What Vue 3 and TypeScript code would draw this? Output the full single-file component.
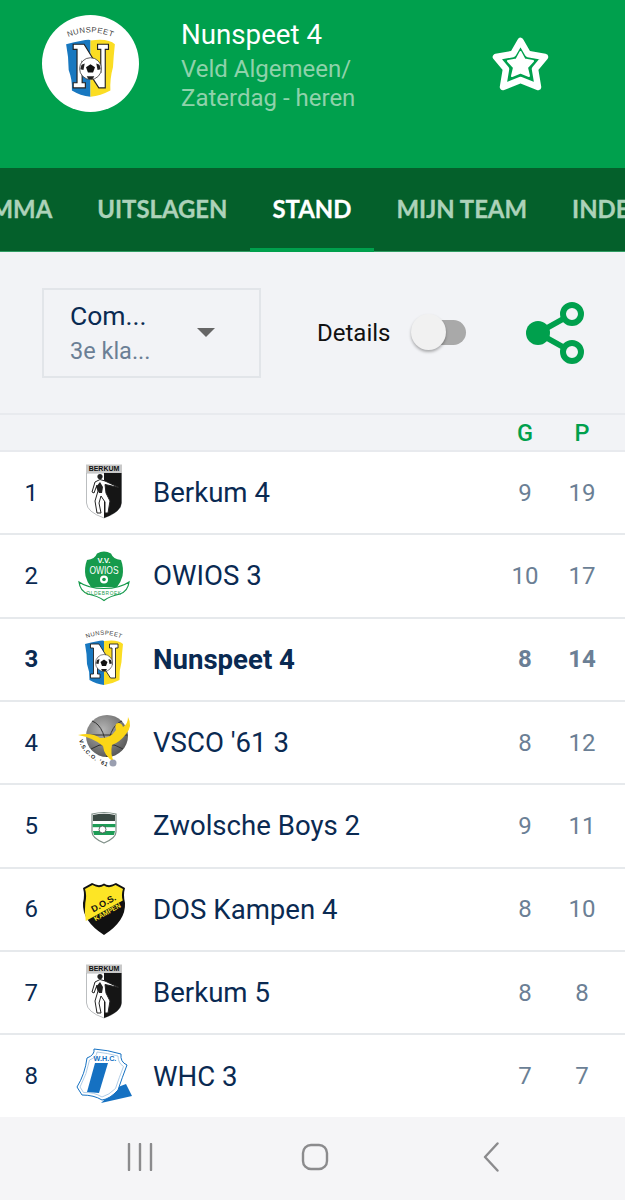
<script setup lang="ts">
interface Team {
  pos: number
  logo: string
  name: string
  g: number
  p: number
  own?: boolean
}

const tabs: { label: string; active?: boolean }[] = [
  { label: 'PROGRAMMA' },
  { label: 'UITSLAGEN' },
  { label: 'STAND', active: true },
  { label: 'MIJN TEAM' },
  { label: 'INDELING' }
]

const teams: Team[] = [
  { pos: 1, logo: 'berkum', name: 'Berkum 4', g: 9, p: 19 },
  { pos: 2, logo: 'owios', name: 'OWIOS 3', g: 10, p: 17 },
  { pos: 3, logo: 'nunspeet', name: 'Nunspeet 4', g: 8, p: 14, own: true },
  { pos: 4, logo: 'vsco', name: "VSCO '61 3", g: 8, p: 12 },
  { pos: 5, logo: 'zwolsche', name: 'Zwolsche Boys 2', g: 9, p: 11 },
  { pos: 6, logo: 'dos', name: 'DOS Kampen 4', g: 8, p: 10 },
  { pos: 7, logo: 'berkum', name: 'Berkum 5', g: 8, p: 8 },
  { pos: 8, logo: 'whc', name: 'WHC 3', g: 7, p: 7 }
]
</script>

<template>
  <div class="screen">
    <svg class="defs" aria-hidden="true">
      <defs>
        <radialGradient id="vsco-ball" cx="40%" cy="35%" r="70%">
          <stop offset="0" stop-color="#b5b5b5" />
          <stop offset="1" stop-color="#555" />
        </radialGradient>

        <symbol id="logo-berkum" viewBox="0 0 60 60">
          <path d="M12.500 10V40Q13 49 30 55Q47 49 47.500 40V10Z" fill="#fff" stroke="#a9adb0" stroke-width=".8" />
          <path d="M30 10H47.500V40Q47 49 30 55Z" fill="#151515" />
          <rect x="12" y="1.500" width="36" height="8.500" fill="#c9c9c9" />
          <text x="30" y="8.300" text-anchor="middle" class="lg-text" font-size="7" font-weight="700" fill="#111">BERKUM</text>
          <circle cx="26" cy="13.500" r="2.600" fill="#222" />
          <path d="M21 19L26 16.500L31 18L45 24.500L31 21.500L32 30L36 38L34 50L31 50L31 39L27 33L25 40L27 50L23 50L21 38L24 28L23 22L20 30L18 29Z" fill="#fff" stroke="#222" stroke-width="1" />
          <path d="M22 24L26 19L29 24L28 30H25Z" fill="#222" />
        </symbol>

        <symbol id="logo-owios" viewBox="0 0 60 60">
          <path d="M13 14Q21 13 23 7.500Q30 3.500 37 7.500Q39 13 47 14Q50 22 48.500 30Q47 36 43 41H17Q13 36 11.500 30Q10 22 13 14Z" fill="#169a4c" />
          <text x="30" y="16.500" text-anchor="middle" class="lg-text" font-size="7.500" font-weight="700" fill="#fff">V.V.</text>
          <text x="30" y="27.500" text-anchor="middle" class="lg-text" font-size="10.500" fill="#fff" textLength="29" lengthAdjust="spacingAndGlyphs">OWIOS</text>
          <circle cx="30" cy="33.500" r="4" fill="#fff" />
          <circle cx="30" cy="33.500" r="1.800" fill="#169a4c" />
          <path d="M5 36Q14 42.500 30 42.500Q46 42.500 55 36Q54 45 46 48Q36 50 30 54.500Q24 50 14 48Q6 45 5 36Z" fill="#fff" stroke="#169a4c" stroke-width="1.200" />
          <text x="30" y="48.500" text-anchor="middle" class="lg-text" font-size="4.800" fill="#169a4c" letter-spacing=".6">OLDEBROEK</text>
        </symbol>

        <symbol id="logo-nunspeet" viewBox="0 0 60 60">
          <path id="nunspeet-arc" d="M10 10.500Q30 1 50 10.500" fill="none" />
          <text class="lg-text" font-size="6" fill="#444" letter-spacing=".4">
            <textPath href="#nunspeet-arc" startOffset="50%" text-anchor="middle">NUNSPEET</textPath>
          </text>
          <path d="M11 15Q30 10 30 12V56Q22 55 15.500 51Q16 43 13 35Q13 25 11 15Z" fill="#1878c0" />
          <path d="M30 12Q44 10 49 15Q48 24 47.500 33Q45 42 45.500 51Q38 55 30 56Z" fill="#fbdd23" />
          <path d="M16.500 15H25L38 36V19H35.500V15H44V19H41.500V49H36.500L23.500 29V45H26V49H16.500V45H19.500V19H16.500Z" fill="#fff" stroke="#222" stroke-width=".9" />
          <circle cx="30" cy="34" r="8.500" fill="#fff" stroke="#333" stroke-width=".6" />
          <path d="M30 30.500L33.500 33L32 37H28L26.500 33Z" fill="#111" />
          <path d="M23 31L25.500 30L24.500 35L22 34.500ZM37 31L34.500 30L35.500 35L38 34.500ZM27 40L33 40L31.500 42.300H28.500Z" fill="#222" />
        </symbol>

        <symbol id="logo-vsco" viewBox="0 0 60 60">
          <circle cx="33" cy="23" r="21" fill="url(#vsco-ball)" />
          <path d="M18 8Q32 13 33 44M48 8Q34 13 33 44M12.500 22H53.500M17 36Q33 26 49 36" fill="none" stroke="#333" stroke-width="1" />
          <path d="M4 22Q18 19 26 25Q36 26 42 17Q40 11 44 10Q48 10 49 14Q54 11 54 4Q59 13 52 21Q46 29 38 32Q36 41 40 49Q30 43 29 33Q20 25 4 22Z" fill="#fbd617" />
          <circle cx="39" cy="50" r="3.500" fill="#9a9fb0" />
          <path id="vsco-arc" d="M5 27Q9 46 42 57" fill="none" />
          <text class="lg-text" font-size="5.500" font-weight="700" fill="#222" letter-spacing=".9">
            <textPath href="#vsco-arc">V.S.C.O. '61</textPath>
          </text>
        </symbol>

        <symbol id="logo-zwolsche" viewBox="0 0 60 60">
          <path d="M18 18Q30 15 42 18V36Q42 42 30 47Q18 42 18 36Z" fill="#fff" stroke="#7f8f88" stroke-width="1.200" />
          <path d="M19 19Q30 16.500 41 19V25H19Z" fill="#3b4a44" />
          <rect x="18.600" y="28" width="22.800" height="3.200" fill="#1e9c56" />
          <path d="M19 35H41L40 39H20Z" fill="#1e9c56" />
          <circle cx="28.500" cy="33.500" r="3.500" fill="#fff" stroke="#3b4a44" stroke-width=".8" />
        </symbol>

        <symbol id="logo-dos" viewBox="0 0 60 60">
          <path d="M18 4Q25 8 30 4.500Q35 8 42 4L51 9Q49 16 51 24Q52 42 30 56Q8 42 9 24Q11 16 9 9Z" fill="#111" />
          <path d="M18.500 6Q25 10 30 6.500Q35 10 41.500 6L49 10Q47 16 48.800 21.500L11.800 42Q10.200 32 11.300 24Q13 16 11 10Z" fill="#fde525" />
          <text transform="translate(31 27) rotate(-29)" text-anchor="middle" class="lg-text" font-size="9" font-weight="700" fill="#111">D.O.S.</text>
          <text transform="translate(34.500 35) rotate(-29)" text-anchor="middle" class="lg-text" font-size="6.800" font-weight="700" fill="#fde525">KAMPEN</text>
        </symbol>

        <symbol id="logo-whc" viewBox="0 0 60 60">
          <path d="M44 41L52 38L58 50L27 57Z" fill="#1571c2" />
          <path d="M13 12Q21 9 20 3Q34 4 47 8Q46 16 53 19Q48 32 44 44Q36 53 28 54Q20 49 8 49L3 41Q11 28 13 12Z" fill="#fff" stroke="#1571c2" stroke-width="1" />
          <path d="M15.500 14Q23 11 23 6Q33 7 44 10Q44 17 49.500 20.500Q45 32 41.500 42.500Q35 49 28 51Q20 46 9.500 46.500L6 41Q13 28 15.500 14Z" fill="none" stroke="#9cbfe0" stroke-width=".8" />
          <path d="M21 17H34L25 47L13 46Z" fill="#1571c2" />
          <text x="31" y="15" text-anchor="middle" class="lg-text" font-size="7.200" font-weight="700" fill="#1571c2">W.H.C.</text>
        </symbol>
      </defs>
    </svg>

    <header class="club">
      <div class="club-badge">
        <svg class="club-logo" viewBox="0 0 60 60"><use href="#logo-nunspeet" /></svg>
      </div>
      <div class="club-info">
        <div class="club-name">Nunspeet 4</div>
        <div class="club-league">Veld Algemeen/<br />Zaterdag - heren</div>
      </div>
      <svg class="star" viewBox="490 34 62 60">
        <path d="M520.500 41L528 54L545 57L535 69L538 87L520.500 80L503 87L506 69L496 57L513 54Z" fill="none" stroke="#fff" stroke-width="6.500" stroke-linejoin="round" />
        <path d="M520.500 52L524.500 59.500L533 61L527 67.500L529 76L520.500 72.500L512 76L514 67.500L508 61L516.500 59.500Z" fill="#fff" stroke="#fff" stroke-width="2" stroke-linejoin="round" />
      </svg>
    </header>

    <nav class="tabs">
      <div v-for="tab in tabs" :key="tab.label" class="tab" :class="{ active: tab.active }">{{ tab.label }}</div>
    </nav>

    <section class="controls">
      <div class="select">
        <div class="select-text">
          <div class="select-main">Com...</div>
          <div class="select-sub">3e kla...</div>
        </div>
        <span class="caret"></span>
      </div>
      <div class="details">
        <span class="details-label">Details</span>
        <span class="switch"><span class="thumb"></span></span>
      </div>
      <svg class="share" viewBox="526 301 60 62">
        <path d="M538 332L572 313M538 332L572 351" stroke="#00a04d" stroke-width="5.500" />
        <circle cx="538" cy="332" r="12" fill="#00a04d" />
        <circle cx="572" cy="313" r="9" fill="#f2f3f6" stroke="#00a04d" stroke-width="6" />
        <circle cx="572" cy="351" r="9" fill="#f2f3f6" stroke="#00a04d" stroke-width="6" />
      </svg>
    </section>

    <div class="table-head">
      <span class="col-g">G</span>
      <span class="col-p">P</span>
    </div>

    <main class="table">
      <div v-for="team in teams" :key="team.pos" class="row" :class="{ own: team.own }">
        <span class="pos">{{ team.pos }}</span>
        <svg class="team-logo" viewBox="0 0 60 60"><use :href="`#logo-${team.logo}`" /></svg>
        <span class="team-name">{{ team.name }}</span>
        <span class="col-g num">{{ team.g }}</span>
        <span class="col-p num">{{ team.p }}</span>
      </div>
    </main>

    <footer class="sysnav">
      <svg class="nav-icon recents" viewBox="0 0 26 28">
        <path d="M2 1V27M13 1V27M24 1V27" stroke="#8b8b8d" stroke-width="2.400" stroke-linecap="round" />
      </svg>
      <svg class="nav-icon home" viewBox="0 0 28 28">
        <rect x="2" y="2" width="24" height="24" rx="8" fill="none" stroke="#8b8b8d" stroke-width="2.400" />
      </svg>
      <svg class="nav-icon back" viewBox="0 0 16 30">
        <path d="M14.500 1.500L2 15L14.500 28.500" fill="none" stroke="#8b8b8d" stroke-width="2.400" stroke-linecap="round" stroke-linejoin="round" />
      </svg>
    </footer>
  </div>
</template>

<style scoped>
.screen {
  width: 625px;
  height: 1200px;
  overflow: hidden;
  background: #fff;
  font-family: Roboto, "Liberation Sans", sans-serif;
  display: flex;
  flex-direction: column;
}
.defs {
  position: absolute;
  width: 0;
  height: 0;
}
.lg-text {
  font-family: "Liberation Sans", sans-serif;
}

.club {
  height: 168px;
  flex: none;
  box-sizing: border-box;
  background: #00a04d;
  display: flex;
  align-items: flex-start;
  padding: 15px 0 0 42px;
}
.club-badge {
  width: 97px;
  height: 97px;
  flex: none;
  border-radius: 50%;
  background: #fff;
  display: flex;
  align-items: center;
  justify-content: center;
}
.club-logo {
  width: 77px;
  height: 77px;
}
.club-info {
  width: 309px;
  margin-left: 42px;
  margin-top: 2px;
}
.club-name {
  font-size: 27.700px;
  line-height: 35px;
  color: #fff;
}
.club-league {
  font-size: 24px;
  line-height: 29px;
  color: #8fd2ab;
  margin-top: 3px;
}
.star {
  width: 62px;
  height: 60px;
  flex: none;
  margin-top: 19px;
}

.tabs {
  height: 84px;
  flex: none;
  box-sizing: border-box;
  background: #04602b;
  box-shadow: inset 0 -1px 0 #2f9c63;
  display: flex;
  overflow: hidden;
}
.tab {
  flex: none;
  box-sizing: border-box;
  height: 84px;
  padding: 0 22.500px;
  line-height: 81px;
  font-family: Lato, "Liberation Sans", sans-serif;
  font-size: 23.900px;
  font-weight: 700;
  -webkit-text-stroke: .3px currentColor;
  color: #acd2b9;
  border-bottom: 4px solid transparent;
}
.tab:first-child {
  margin-left: -130.500px;
}
.tab.active {
  color: #fff;
  border-bottom-color: #00a04d;
}

.controls {
  height: 161px;
  flex: none;
  box-sizing: border-box;
  background: #f2f3f6;
  display: flex;
  align-items: center;
  padding: 0 39px 0 42px;
}
.select {
  width: 219px;
  height: 90px;
  flex: none;
  box-sizing: border-box;
  border: 2px solid #e2e5e9;
  display: flex;
  align-items: center;
  padding-left: 26px;
}
.select-text {
  width: 127px;
}
.select-main {
  font-size: 26.500px;
  line-height: 36px;
  color: #0a2a52;
}
.select-sub {
  font-size: 23.500px;
  line-height: 34px;
  color: #6b7f95;
}
.caret {
  width: 0;
  height: 0;
  border-left: 9px solid transparent;
  border-right: 9px solid transparent;
  border-top: 9px solid #666;
}
.details {
  display: flex;
  align-items: center;
  margin-left: 56px;
}
.details-label {
  font-size: 24px;
  color: #111;
}
.switch {
  position: relative;
  width: 54px;
  height: 25px;
  margin-left: 22px;
  border-radius: 13px;
  background: #a9a9a9;
  display: block;
}
.thumb {
  position: absolute;
  left: -1px;
  top: -6px;
  width: 35px;
  height: 36px;
  border-radius: 50%;
  background: #f1f1f1;
  box-shadow: 0 2px 3px rgba(0, 0, 0, .3);
}
.share {
  width: 60px;
  height: 62px;
  flex: none;
  margin-left: auto;
}

.table-head {
  height: 39px;
  flex: none;
  box-sizing: border-box;
  background: #f2f3f6;
  border-top: 2px solid #e8eaee;
  border-bottom: 2px solid #e8eaee;
  display: flex;
  align-items: center;
  justify-content: flex-end;
  padding-right: 15px;
  color: #00a04d;
  font-size: 23.500px;
  font-weight: 500;
}
.col-g,
.col-p {
  text-align: center;
}
.col-g {
  width: 56px;
}
.col-p {
  width: 56px;
  margin-left: 1px;
}

.table {
  flex: 1;
  min-height: 0;
  display: flex;
  flex-direction: column;
}
.row {
  height: 83.330px;
  flex: none;
  box-sizing: border-box;
  display: flex;
  align-items: center;
  padding-right: 15px;
  border-bottom: 2px solid #e6e9ec;
  color: #0a2a52;
  font-size: 27.600px;
}
.row:last-child {
  flex: 1;
  height: auto;
  min-height: 0;
  border-bottom: 0;
}
.pos {
  width: 74px;
  flex: none;
  box-sizing: border-box;
  padding-left: 24.500px;
  font-size: 24px;
}
.team-logo {
  width: 60px;
  height: 60px;
  flex: none;
}
.team-name {
  flex: 1;
  margin-left: 19px;
}
.num {
  font-size: 24px;
  color: #6b7f95;
}
.own .pos,
.own .team-name,
.own .num {
  font-weight: 700;
}

.sysnav {
  height: 83px;
  flex: none;
  background: #f5f5f7;
  display: flex;
  align-items: center;
  box-sizing: border-box;
  padding: 0 0 4px 127px;
}
.nav-icon {
  flex: none;
}
.recents {
  width: 26px;
  height: 28px;
}
.home {
  width: 28px;
  height: 28px;
  margin-left: 148px;
}
.back {
  width: 16px;
  height: 30px;
  margin-left: 154px;
}
</style>
